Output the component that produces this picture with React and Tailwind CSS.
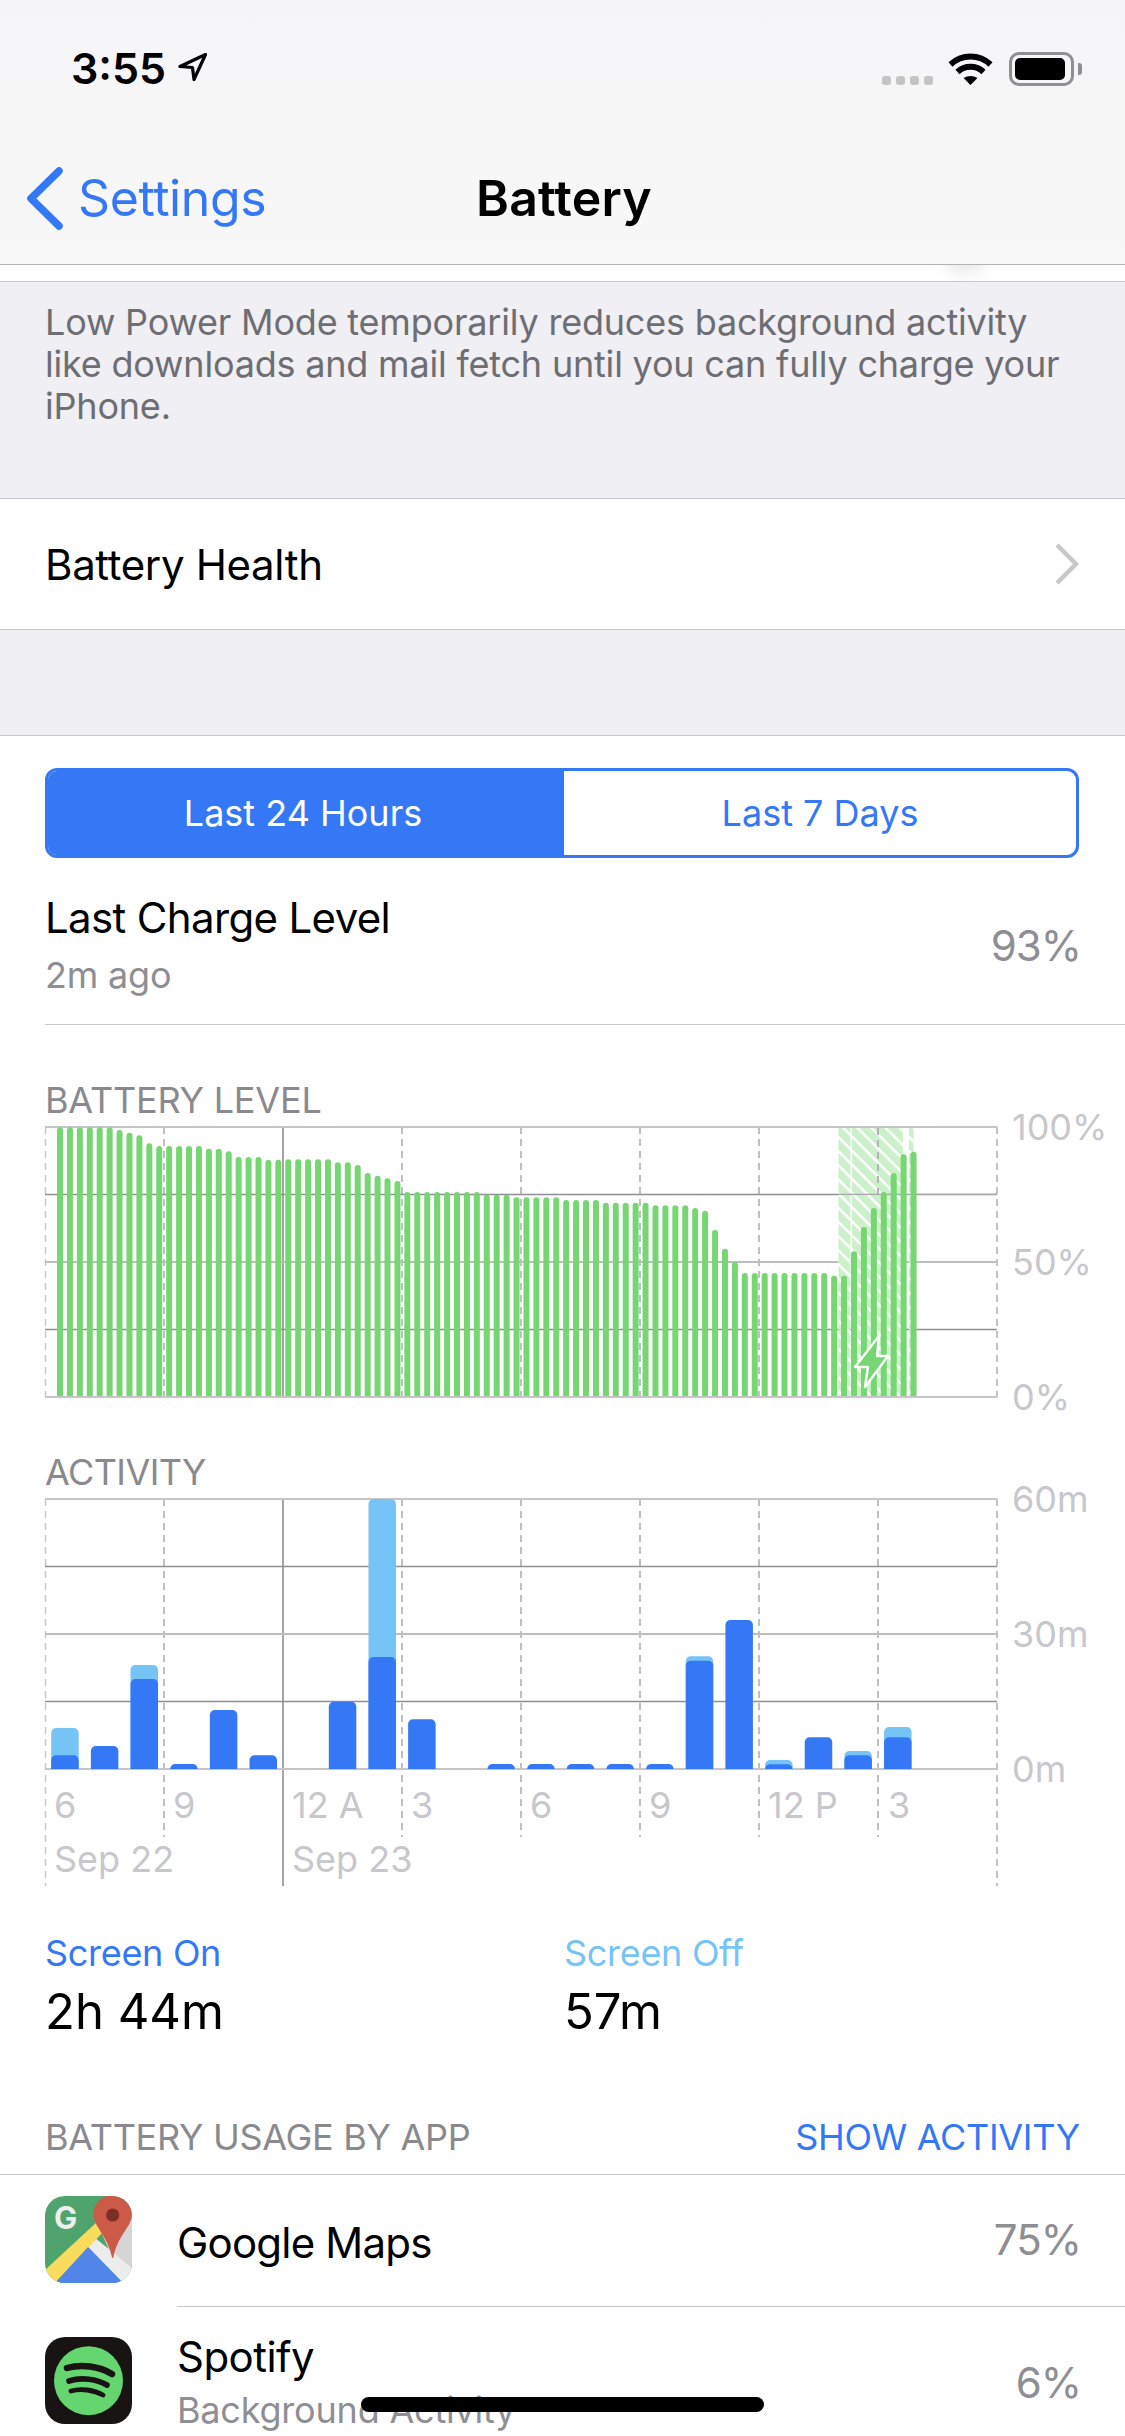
import React from "react";

const FONT = "Inter, 'Noto Sans', sans-serif";
const batteryTops = [202,202,202,202,202,202,210,218,226,250,258,258,258,258,258,266,266,274,291,291,291,299,299,298,298,298,298,298,307,307,315,339,347,355,363,396,396,396,396,396,396,396,396,404,404,404,412,412,412,412,412,420,420,420,420,428,428,428,428,428,436,436,436,436,444,452,510,566,606,639,639,639,639,639,639,639,639,639,647,647,574,501,444,396,339,283,275];
const activity = [
  [864,946],[null,918],[675,717],[null,972],[null,810],[null,946],[null,null],[null,785],[177,651],[null,838],[null,null],[null,972],[null,972],[null,972],[null,972],[null,972],[649,662],[null,540],[960,973],[null,892],[933,946],[861,892],
];
const vx = [164, 283, 402, 521, 640, 759, 878];

function Grid({ top, extend }) {
  const ys = [0, 67.5, 135, 202.5, 270].map((d) => top + d);
  const styles = [["#c6c6c9", 2], ["#8f8f93", 1.4], ["#bebec2", 2], ["#8f8f93", 1.4], ["#c6c6c9", 2]];
  const bottom = top + 270;
  return (
    <g>
      <line x1="45.5" x2="45.5" y1={top} y2={extend ? bottom + 117 : bottom} stroke="#c9c9cd" strokeWidth="1.5" strokeDasharray="7 5" />
      <line x1="997" x2="997" y1={top} y2={extend ? bottom + 117 : bottom} stroke="#c4c4c8" strokeWidth="2" strokeDasharray="7 5" />
      {vx.map((x) =>
        x === 283 ? (
          <line key={x} x1={x} x2={x} y1={top} y2={extend ? bottom + 117 : bottom} stroke="#8f8f93" strokeWidth="1.6" />
        ) : (
          <line key={x} x1={x} x2={x} y1={top} y2={extend ? bottom + 68 : bottom} stroke="#c0c0c4" strokeWidth="2" strokeDasharray="7 5" />
        )
      )}
      {ys.map((y, i) => (
        <line key={i} x1="45" x2="997" y1={y} y2={y} stroke={styles[i][0]} strokeWidth={styles[i][1]} />
      ))}
    </g>
  );
}

function BatteryChart() {
  return (
    <svg width="1000" height="274" viewBox="0 1125 1000 274" className="block shrink-0">
      <defs>
        <pattern id="hatch" width="10" height="10" patternUnits="userSpaceOnUse" patternTransform="rotate(45)">
          <rect width="10" height="10" fill="#ccf0ca" />
          <rect width="10" height="2.4" fill="#ffffff" />
        </pattern>
      </defs>
      <Grid top={1127} />
      <rect x="838.5" y="1128" width="12" height="268" fill="url(#hatch)" />
      <rect x="852" y="1128" width="51" height="268" fill="url(#hatch)" />
      <rect x="909" y="1128" width="4.5" height="268" fill="url(#hatch)" />
      <line x1="878" x2="878" y1="1128" y2="1194" stroke="#b4b4b8" strokeWidth="2" strokeDasharray="7 5" />
      <line x1="838" x2="997" y1="1194.3" y2="1194.3" stroke="#a8a8ac" strokeWidth="1.2" />
      {batteryTops.map((t, i) => {
        const x = 57 + i * 9.925;
        const y = 1060 + t / 3;
        return <path key={i} d={`M${x} 1396 V${y + 3} a3 3 0 0 1 6 0 V1396 Z`} fill="#76d672" />;
      })}
      <path d="M879 1336 L855 1367 L868 1367 L865 1387 L888 1356 L877 1356 Z" fill="#76d672" stroke="#ffffff" strokeWidth="2.4" strokeLinejoin="round" />
    </svg>
  );
}

function ActivityChart() {
  const bar = (x, t, fill, key) => {
    const y = 1440 + t / 3;
    return <path key={key} d={`M${x} 1769 V${y + 5} a5 5 0 0 1 5 -5 H${x + 22.5} a5 5 0 0 1 5 5 V1769 Z`} fill={fill} />;
  };
  const axis = "fill-[#c7c7cc] text-[36px]";
  return (
    <svg width="1000" height="393" viewBox="0 1497 1000 393" className="block shrink-0" style={{ fontFamily: FONT }}>
      <Grid top={1499} extend />
      {activity.map(([l, d], i) => {
        const x = 51.2 + i * 39.66;
        return (
          <g key={i}>
            {l !== null && bar(x, l, "#76c4f6", "l")}
            {d !== null && bar(x, d, "#3478f6", "d")}
          </g>
        );
      })}
      <text x="54" y="1818" className={axis}>6</text>
      <text x="173" y="1818" className={axis}>9</text>
      <text x="292" y="1818" className={axis}>12 A</text>
      <text x="411" y="1818" className={axis}>3</text>
      <text x="530" y="1818" className={axis}>6</text>
      <text x="649" y="1818" className={axis}>9</text>
      <text x="768" y="1818" className={axis}>12 P</text>
      <text x="888" y="1818" className={axis}>3</text>
      <text x="54" y="1872" className={axis}>Sep 22</text>
      <text x="292" y="1872" className={axis}>Sep 23</text>
    </svg>
  );
}

function AxisLabels({ labels }) {
  return (
    <div className="flex h-[270px] flex-col justify-between pl-[12px] mt-[2px]">
      {labels.map((l) => (
        <div key={l} className="h-0 flex items-center text-[36px] text-[#c7c7cc] whitespace-nowrap">{l}</div>
      ))}
    </div>
  );
}

function MapsIcon() {
  return (
    <svg width="87" height="87" viewBox="0 0 87 87" className="block shrink-0" style={{ fontFamily: FONT }}>
      <defs>
        <clipPath id="mapclip"><rect width="87" height="87" rx="20" /></clipPath>
      </defs>
      <g clipPath="url(#mapclip)">
        <rect width="87" height="87" fill="#4fa46e" />
        <path d="M52 26 L87 9 V87 H78 Z" fill="#d5d5d5" />
        <path d="M43 51 L49 41 L87 72 V87 H78 Z" fill="#ececec" />
        <path d="M0 74 L52 26 L58 36 L10 87 H0 Z" fill="#f9dc5c" />
        <path d="M43 51 L78 87 H10 Z" fill="#5186e8" />
        <path d="M67.7 -1 C57 -1 48.5 7.5 48.5 18 C48.5 31 62 38 67.2 62 H68.2 C73 38 87 31 87 18 C87 7.5 78.5 -1 67.7 -1 Z" fill="#cb5a46" />
        <circle cx="67.7" cy="19" r="6.6" fill="#7c2f25" />
        <text x="9" y="33" fontSize="31" fontWeight="700" fill="#eeeeee">G</text>
      </g>
    </svg>
  );
}

function SpotifyIcon() {
  return (
    <svg width="87" height="87" viewBox="0 0 87 87" className="block shrink-0">
      <rect width="87" height="87" rx="20" fill="#191414" />
      <circle cx="43.5" cy="43.7" r="34.5" fill="#65d570" />
      <g fill="none" stroke="#191414" strokeLinecap="round">
        <path d="M22 31 C36 27 54 29 67 37" strokeWidth="6.5" />
        <path d="M24 44 C36 40 52 42 62 48" strokeWidth="5.6" />
        <path d="M26 54 C36 51 49 53 58 58" strokeWidth="4.8" />
      </g>
    </svg>
  );
}

export default function App() {
  return (
    <div className="relative h-[2436px] w-[1125px] overflow-hidden bg-white text-black" style={{ fontFamily: FONT }}>
      {/* status + nav */}
      <header className="h-[265px] border-b border-[#b2b2b2] bg-gradient-to-b from-[#f5f5f7] to-[#f8f8f8]">
        <div className="flex h-[130px] items-start justify-between pl-[71px] pr-[43px] pt-[47px]">
          <div className="flex items-center gap-[12px]">
            <span className="text-[43px] font-semibold leading-[42px]">3:55</span>
            <svg width="29" height="28" viewBox="0 0 29 28" className="mt-[-2px]">
              <path d="M27.5 1.5 L2 13.5 L14.5 14.5 L16 26.5 Z" fill="none" stroke="#000" strokeWidth="3.2" strokeLinejoin="round" />
            </svg>
          </div>
          <div className="flex items-start pt-[5px]">
            <div className="mt-[24px] flex gap-[5px]">
              <div className="h-[9px] w-[9px] rounded-[3px] bg-[#c4c4c4]" />
              <div className="h-[9px] w-[9px] rounded-[3px] bg-[#c4c4c4]" />
              <div className="h-[9px] w-[9px] rounded-[3px] bg-[#c4c4c4]" />
              <div className="h-[9px] w-[9px] rounded-[3px] bg-[#c4c4c4]" />
            </div>
            <svg width="45" height="33" viewBox="0 0 45 33" className="ml-[15px]">
              <path d="M2.5 12.5 A29 29 0 0 1 42.5 12.5" fill="none" stroke="#000" strokeWidth="6" />
              <path d="M9.5 20 A19 19 0 0 1 35.5 20" fill="none" stroke="#000" strokeWidth="6" />
              <path d="M22.5 33 L15.5 26 Q22.5 22 29.5 26 Z" fill="#000" />
            </svg>
            <div className="ml-[16px] flex items-center">
              <div className="flex h-[34px] w-[65px] items-center rounded-[10px] border-[3px] border-[#8e8e93] pl-[3px]">
                <div className="h-[22px] w-[50px] rounded-[5px] bg-black" />
              </div>
              <div className="ml-[4px] h-[12px] w-[4px] rounded-r-[3px] bg-[#8e8e93]" />
            </div>
          </div>
        </div>
        <div className="grid h-[134px] grid-cols-[476px_1fr] items-start">
          <div className="flex items-start">
            <svg width="70" height="70" viewBox="0 0 70 70" className="mt-[35px] shrink-0">
              <path d="M59 6 L31 33.5 L59 61" fill="none" stroke="#3478f6" strokeWidth="7.5" strokeLinecap="round" strokeLinejoin="round" />
            </svg>
            <span className="ml-[8px] mt-[38px] text-[50px] leading-[60px] tracking-[-0.4px] text-[#3478f6]">Settings</span>
          </div>
          <span className="mt-[38px] text-[50px] font-semibold leading-[60px] tracking-[0.2px]">Battery</span>
        </div>
      </header>
      {/* white strip */}
      <div className="relative h-[17px] overflow-hidden border-b border-[#c8c8cc] bg-white">
        <div className="absolute left-[945px] top-[-22px] h-[30px] w-[40px] rounded-full bg-[#e9e9e9] blur-[8px]" />
      </div>
      {/* note */}
      <div className="h-[216px] bg-[#efeff4] px-[45px] pt-[19px] text-[36px] leading-[42px] tracking-[-0.2px] text-[#6d6d72]">
        Low Power Mode temporarily reduces background activity
        <br />
        like downloads and mail fetch until you can fully charge your
        <br />
        iPhone.
      </div>
      {/* battery health */}
      <div className="flex h-[132px] items-center justify-between border-y border-[#c8c8cc] bg-white pl-[45px] pr-[45px]">
        <span className="text-[42px] tracking-[-0.35px]">Battery Health</span>
        <svg width="26" height="42" viewBox="0 0 26 42" className="shrink-0">
          <path d="M3 2 L22 21 L3 40" fill="none" stroke="#c7c7cc" strokeWidth="4.5" />
        </svg>
      </div>
      <div className="h-[105px] bg-[#efeff4]" />
      {/* segment */}
      <div className="border-t border-[#c8c8cc] px-[45px] pt-[32px]">
        <div className="flex h-[90px] w-[1034px] overflow-hidden rounded-[12px] border-[3px] border-[#3478f6] text-[36px]">
          <div className="flex w-[516px] items-center justify-center bg-[#3478f6] pr-[6px] text-white">Last 24 Hours</div>
          <div className="flex flex-1 items-center justify-center text-[#3478f6]">Last 7 Days</div>
        </div>
      </div>
      {/* last charge */}
      <div className="ml-[45px] flex h-[167px] items-center justify-between border-b border-[#c8c8cc] pr-[44px]">
        <div className="pt-[4px]">
          <div className="text-[42px] leading-[60px] tracking-[-0.65px]">Last Charge Level</div>
          <div className="mt-[3px] text-[36px] leading-[48px] tracking-[-0.2px] text-[#8e8e93]">2m ago</div>
        </div>
        <div className="pt-[8px] text-[42px] tracking-[-1px] text-[#8e8e93]">93%</div>
      </div>
      {/* battery level */}
      <div className="pt-[55px]">
        <div className="mb-[5px] pl-[45px] text-[36px] leading-[40px] tracking-[-0.2px] text-[#8a8a8e]">BATTERY LEVEL</div>
        <div className="flex items-start">
          <BatteryChart />
          <AxisLabels labels={["100%", "50%", "0%"]} />
        </div>
      </div>
      {/* activity */}
      <div className="pt-[53px]">
        <div className="mb-[5px] pl-[45px] text-[36px] leading-[40px] tracking-[-0.6px] text-[#8a8a8e]">ACTIVITY</div>
        <div className="flex items-start">
          <ActivityChart />
          <AxisLabels labels={["60m", "30m", "0m"]} />
        </div>
      </div>
      {/* totals */}
      <div className="grid grid-cols-[519px_1fr] pl-[45px] pt-[41px]">
        <div>
          <div className="text-[36px] leading-[44px] tracking-[-0.3px] text-[#3478f6]">Screen On</div>
          <div className="mt-[7px] text-[49px] leading-[60px]">2h 44m</div>
        </div>
        <div>
          <div className="text-[36px] leading-[44px] tracking-[-0.3px] text-[#76c4f6]">Screen Off</div>
          <div className="mt-[7px] text-[49px] leading-[60px]">57m</div>
        </div>
      </div>
      {/* usage header */}
      <div className="mt-[75px] flex h-[58px] items-start justify-between border-b border-[#c8c8cc] px-[45px] text-[36px] leading-[40px] tracking-[-0.3px]">
        <span className="text-[#8a8a8e]">BATTERY USAGE BY APP</span>
        <span className="text-[#3478f6]">SHOW ACTIVITY</span>
      </div>
      {/* rows */}
      <div className="flex h-[132px] items-start pl-[45px]">
        <div className="pt-[21px]"><MapsIcon /></div>
        <div className="ml-[45px] flex h-full flex-1 items-start justify-between border-b border-[#c8c8cc] pr-[44px] pt-[38px]">
          <span className="text-[42px] leading-[60px] tracking-[-0.8px]">Google Maps</span>
          <span className="mt-[-1px] text-[42px] leading-[56px] tracking-[-1px] text-[#8e8e93]">75%</span>
        </div>
      </div>
      <div className="flex items-start pl-[45px]">
        <div className="pt-[30px]"><SpotifyIcon /></div>
        <div className="ml-[45px] flex flex-1 items-start justify-between pr-[44px] pt-[20px]">
          <div>
            <div className="text-[42px] leading-[60px] tracking-[-0.55px]">Spotify</div>
            <div className="text-[36px] leading-[46px] tracking-[-0.2px] text-[#8e8e93]">Background Activity</div>
          </div>
          <span className="pt-[28px] text-[42px] leading-[56px] tracking-[-1px] text-[#8e8e93]">6%</span>
        </div>
      </div>
      {/* home indicator */}
      <div className="absolute left-[361px] top-[2397px] h-[15px] w-[403px] rounded-full bg-black" />
    </div>
  );
}
